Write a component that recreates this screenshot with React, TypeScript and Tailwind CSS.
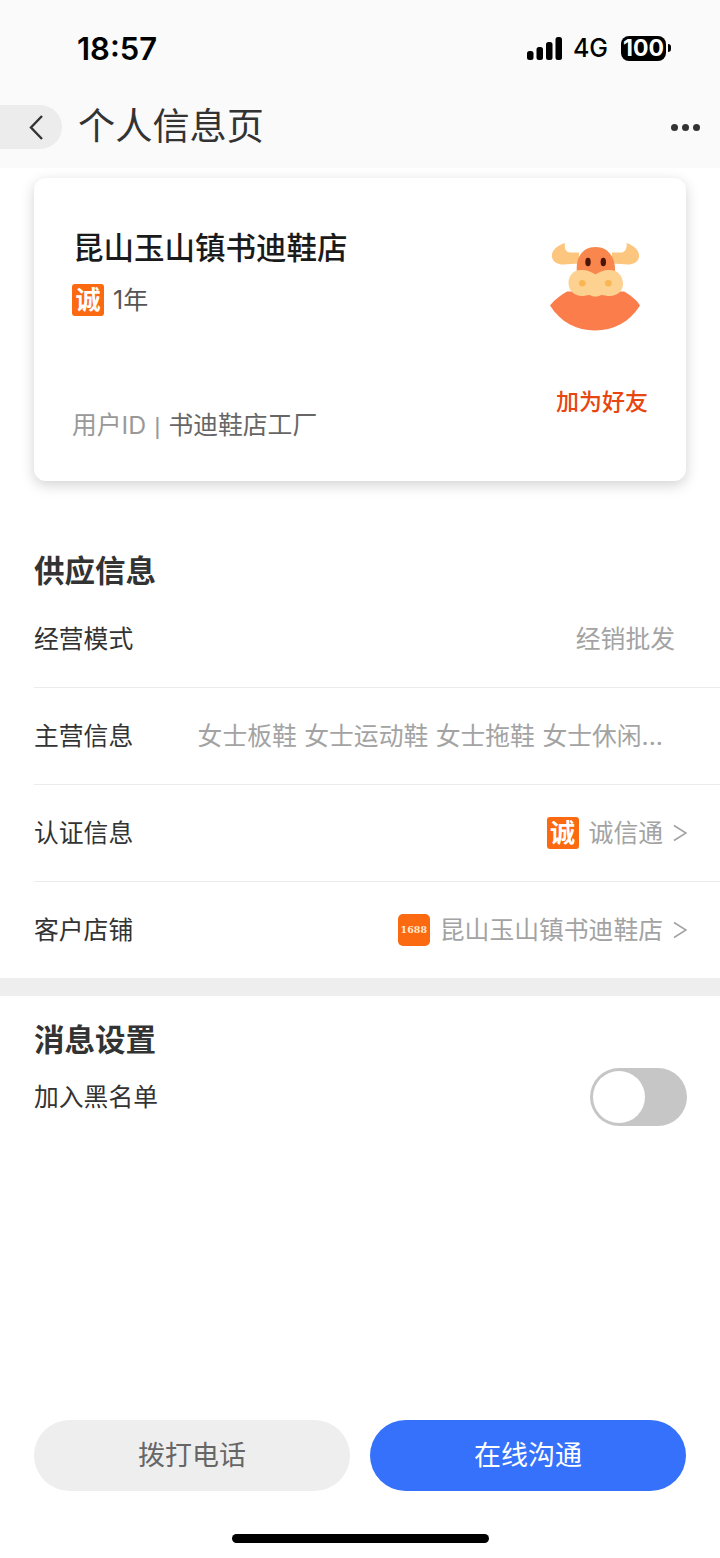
const FONT = "font-['Inter','Noto_Sans_CJK_SC',sans-serif]";

function ChengBadge() {
  return (
    <span className="flex h-8 w-8 shrink-0 items-center justify-center rounded-[3px] bg-[#fb6a10] text-[25px] leading-none font-bold text-white">
      诚
    </span>
  );
}

function Arrow() {
  return (
    <svg viewBox="0 0 14 18" className="ml-[10px] h-[18px] w-[14px]" fill="none">
      <path d="M1 1.5 L13 9 L1 16.5" stroke="#a3a3a3" strokeWidth="1.6" />
    </svg>
  );
}

function Bull() {
  return (
    <svg viewBox="0 0 100 100" className="h-[100px] w-[100px]">
      {/* horns */}
      <path d="M20 4 C13 6 6 11 7 18 C8 23.500 13 25.500 18 25.500 L34 24.500 L34 13.500 L25 13.500 C21 13.500 19 9 20 4 Z" fill="#fcc67f" />
      <path d="M81.500 4 C88 6 95 11 94 18 C93 23.500 88 25.500 83 25.500 L67 24.500 L67 13.500 L76 13.500 C80 13.500 82.500 9 81.500 4 Z" fill="#fcc67f" />
      {/* cape */}
      <path d="M5 66.500 C10 60 16 56 22 52.500 L79 52.500 C85 56 91 60 95 66.500 C85 83 68 91.500 50 91.500 C32 91.500 15 83 5 66.500 Z" fill="#fb7d4c" />
      {/* head */}
      <path d="M32 34 C30 18 38 8 50.500 8 C63 8 71 18 70 34 L60 42 L42 42 Z" fill="#f9864c" />
      <ellipse cx="43" cy="23" rx="2.700" ry="4.300" fill="#4a1508" />
      <ellipse cx="58.300" cy="23" rx="2.700" ry="4.300" fill="#4a1508" />
      {/* muzzle */}
      <path d="M50.500 35.500 C46 33 43 31 36 31 C28 31 23.500 37 23.500 44 C23.500 52 30 57 36.500 57 C41 57 44 55 46 56.500 C48 58 53 58 55 56.500 C57 55 60 57 65 57 C72 57 78.500 52 78 44 C77.500 37 73 31 65 31 C58 31 55 33 50.500 35.500 Z" fill="#fdd18f" />
      <circle cx="37.300" cy="44.300" r="3.300" fill="#fbb654" />
      <circle cx="63.300" cy="44.300" r="3.300" fill="#fbb654" />
    </svg>
  );
}

function Row({ label, children }: { label: string; children: React.ReactNode }) {
  return (
    <div className="ml-[34px] flex h-[97px] items-center justify-between border-b border-[#ececec]">
      <span className="shrink-0 text-[24.8px] leading-none text-[#333333]">{label}</span>
      {children}
    </div>
  );
}

export default function App() {
  return (
    <div className={`${FONT} flex h-[1558px] w-[720px] flex-col overflow-hidden bg-white`}>
      {/* status bar + nav */}
      <div className="h-[168px] shrink-0 bg-[#fafafa]">
        <div className="flex h-[96px] items-center justify-between pr-[49px] pl-[77px]">
          <span className="text-[31px] leading-none font-semibold text-black">18:57</span>
          <div className="flex items-center">
            <svg viewBox="0 0 35 23" className="h-[23px] w-[35px]">
              <rect x="0" y="14" width="6.500" height="9" rx="2.500" fill="#000" />
              <rect x="9.500" y="10" width="6.500" height="13" rx="2.500" fill="#000" />
              <rect x="19" y="5" width="6.500" height="18" rx="2.500" fill="#000" />
              <rect x="28.500" y="0" width="6.500" height="23" rx="2.500" fill="#000" />
            </svg>
            <span className="ml-[11px] text-[25px] leading-none font-medium text-black">4G</span>
            <span className="ml-[13px] flex h-[25px] w-[45px] items-center justify-center rounded-[8px] bg-black text-[23px] leading-none font-bold text-white">
              100
            </span>
            <span className="ml-[2px] h-[8px] w-[3px] rounded-r-full bg-black" />
          </div>
        </div>
        <div className="mt-[9px] flex h-[44px] items-center justify-between pr-[20px]">
          <div className="flex items-center">
            <div className="flex h-[44px] w-[62px] items-center justify-end rounded-r-[22px] bg-[#ececec] pr-[19px]">
              <svg viewBox="0 0 14 25" className="h-[25px] w-[14px]" fill="none">
                <path d="M13 1 L2 12.500 L13 24" stroke="#333333" strokeWidth="2.400" />
              </svg>
            </div>
            <span className="ml-[16px] text-[37.200px] leading-none text-[#333333]">个人信息页</span>
          </div>
          <div className="flex gap-[4px]">
            <span className="h-[7px] w-[7px] rounded-full bg-[#333333]" />
            <span className="h-[7px] w-[7px] rounded-full bg-[#333333]" />
            <span className="h-[7px] w-[7px] rounded-full bg-[#333333]" />
          </div>
        </div>
      </div>

      {/* profile card */}
      <div className="mx-[34px] mt-[10px] flex h-[303px] shrink-0 justify-between rounded-[12px] bg-white pt-[54px] pr-[38px] pb-[43px] pl-[38px] shadow-[0_4px_14px_rgba(0,0,0,0.18)]">
        <div className="flex flex-col">
          <div className="ml-[1px] text-[30.500px] leading-[32px] font-medium text-[#1a1a1a]">昆山玉山镇书迪鞋店</div>
          <div className="mt-[20px] flex items-center">
            <ChengBadge />
            <span className="ml-[9px] text-[25px] leading-none text-[#555555]">1年</span>
          </div>
          <div className="mt-auto flex items-center text-[24.800px] leading-none text-[#999999]">
            用户ID
            <span className="mx-[8px] font-['Liberation_Sans',sans-serif] text-[24px]">|</span>
            <span className="text-[#666666]">书迪鞋店工厂</span>
          </div>
        </div>
        <div className="flex flex-col items-end">
          <div className="mt-[7px] mr-[3px]">
            <Bull />
          </div>
          <div className="mt-[52px] text-[23px] leading-none font-medium text-[#e8460f]">加为好友</div>
        </div>
      </div>

      {/* supply info */}
      <div className="mt-[73px] pl-[34px] text-[30.500px] leading-[34px] font-semibold text-[#333333]">供应信息</div>
      <div className="mt-[3px]">
        <Row label="经营模式">
          <span className="mr-[45px] text-[24.800px] leading-none text-[#a3a3a3]">经销批发</span>
        </Row>
        <Row label="主营信息">
          <span className="mr-[57px] text-[24.800px] leading-none [word-spacing:0.5px] whitespace-nowrap text-[#a3a3a3]">
            女士板鞋 女士运动鞋 女士拖鞋 女士休闲...
          </span>
        </Row>
        <Row label="认证信息">
          <div className="mr-[33px] flex items-center">
            <ChengBadge />
            <span className="ml-[10px] text-[24.800px] leading-none text-[#a3a3a3]">诚信通</span>
            <Arrow />
          </div>
        </Row>
        <div className="ml-[34px] flex h-[96px] items-center justify-between">
          <span className="text-[24.800px] leading-none text-[#333333]">客户店铺</span>
          <div className="mr-[33px] flex items-center">
            <span className="flex h-8 w-8 items-center justify-center rounded-[5px] bg-[#fb6a10] font-['DejaVu_Serif',serif] text-[9.500px] leading-none font-bold text-[#ffe9cf]">
              1688
            </span>
            <span className="ml-[10px] text-[24.800px] leading-none text-[#a3a3a3]">昆山玉山镇书迪鞋店</span>
            <Arrow />
          </div>
        </div>
      </div>
      <div className="h-[18px] shrink-0 bg-[#eeeeee]" />

      {/* message settings */}
      <div className="mt-[27px] pl-[34px] text-[30.500px] leading-[34px] font-semibold text-[#333333]">消息设置</div>
      <div className="mt-[11px] flex items-start justify-between pr-[33px] pl-[34px]">
        <span className="mt-[14px] text-[24.800px] leading-[30px] text-[#333333]">加入黑名单</span>
        <div className="flex h-[58px] w-[97px] items-center rounded-full bg-[#c6c6c6] pl-[3px]">
          <span className="h-[52px] w-[52px] rounded-full bg-white" />
        </div>
      </div>

      {/* bottom actions */}
      <div className="mt-auto flex justify-between px-[34px]">
        <div className="flex h-[71px] w-[316px] items-center justify-center rounded-full bg-[#eeeeee] text-[27px] leading-none text-[#666666]">
          拨打电话
        </div>
        <div className="flex h-[71px] w-[316px] items-center justify-center rounded-full bg-[#3671fb] text-[27px] leading-none text-white">
          在线沟通
        </div>
      </div>
      <div className="mt-[43px] mb-[15px] flex justify-center">
        <div className="h-[9px] w-[257px] rounded-full bg-black" />
      </div>
    </div>
  );
}
